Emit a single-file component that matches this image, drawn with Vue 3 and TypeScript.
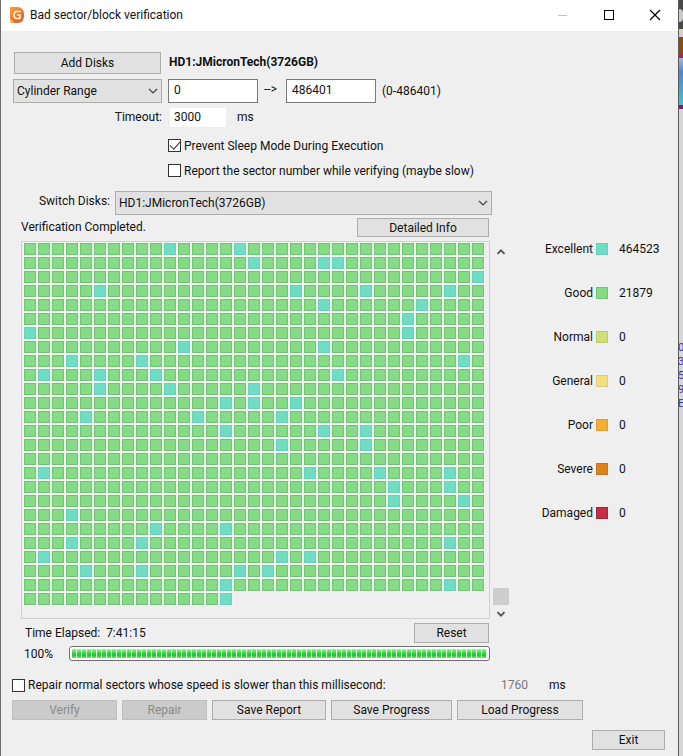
<script setup lang="ts">
import { ref } from 'vue'

type Grade = 'excellent' | 'good' | 'normal' | 'general' | 'poor' | 'severe' | 'damaged'

interface LegendEntry {
  grade: Grade
  label: string
  count: number
}

const mode = ref('Cylinder Range')
const rangeStart = ref('0')
const rangeEnd = ref('486401')
const timeout = ref('3000')
const preventSleep = ref(true)
const reportSector = ref(false)
const repairSlow = ref(false)
const slowLimit = ref('1760')
const disk = ref('HD1:JMicronTech(3726GB)')
const percent = ref(100)

const legend: LegendEntry[] = [
  { grade: 'excellent', label: 'Excellent', count: 464523 },
  { grade: 'good', label: 'Good', count: 21879 },
  { grade: 'normal', label: 'Normal', count: 0 },
  { grade: 'general', label: 'General', count: 0 },
  { grade: 'poor', label: 'Poor', count: 0 },
  { grade: 'severe', label: 'Severe', count: 0 },
  { grade: 'damaged', label: 'Damaged', count: 0 },
]

// Columns holding an "excellent" block, one list for each row of the map.
const columns = 33
const blockCount = 25 * columns + 15
const excellentByRow: number[][] = [
  [10, 15], [16, 21, 22], [32], [5, 19, 24, 30], [21, 28], [27], [0, 27], [11, 21],
  [3, 8, 31], [1, 5, 9, 22], [5, 10, 16], [14, 16, 19], [4, 12, 18], [14, 21, 24],
  [18, 24], [], [1, 20, 25, 30], [26, 30], [26, 31], [3], [9, 14], [3, 8, 30],
  [1, 18, 20], [4, 8, 15, 17], [14, 30], [14],
]

const blocks: Grade[] = Array.from({ length: blockCount }, (_, i) =>
  excellentByRow[Math.floor(i / columns)].includes(i % columns) ? 'excellent' : 'good',
)
</script>

<template>
  <div class="screen">
    <main class="window">
      <header class="titlebar">
        <svg class="logo" viewBox="0 0 16 16" aria-hidden="true">
          <defs>
            <linearGradient id="logo-fill" x1="0" y1="0" x2="1" y2="1">
              <stop offset="0" stop-color="#f9a33c" />
              <stop offset="1" stop-color="#e2501f" />
            </linearGradient>
          </defs>
          <path d="M1 0H8C13 0 15 3 15 8S13 16 8 16H5L1 12Z" fill="url(#logo-fill)" />
          <path d="M1 12L5 16H1Z" fill="#f6b26b" />
          <path d="M12 4.5H8C6 4.5 5 6 5 8S6 11.5 8 11.5H11V8H8" fill="none" stroke="#fff3e6" stroke-width="1.6" />
        </svg>
        <h1 class="title">Bad sector/block verification</h1>
        <button class="caption" aria-label="Minimize" disabled>
          <svg viewBox="0 0 12 12"><path d="M1 6.5H10" stroke="#c4c4c4" /></svg>
        </button>
        <button class="caption" aria-label="Maximize">
          <svg viewBox="0 0 12 12"><rect x="1.5" y="1.5" width="9" height="9" fill="none" stroke="#000" /></svg>
        </button>
        <button class="caption" aria-label="Close">
          <svg viewBox="0 0 12 12"><path d="M1 1L11 11M11 1L1 11" stroke="#000" stroke-width="1.2" /></svg>
        </button>
      </header>

      <div class="body">
        <section class="setup">
          <button class="btn add">Add Disks</button>
          <strong class="disk-name">HD1:JMicronTech(3726GB)</strong>

          <div class="combo">
            <select v-model="mode" aria-label="Range type">
              <option>Cylinder Range</option>
            </select>
            <svg class="chevron" viewBox="0 0 10 6"><path d="M1 1L5 5L9 1" /></svg>
          </div>
          <div class="range">
            <input v-model="rangeStart" class="field" aria-label="Range start" />
            <span class="arrow">--&gt;</span>
            <input v-model="rangeEnd" class="field" aria-label="Range end" />
            <span>(0-486401)</span>
          </div>

          <label class="timeout-label" for="timeout">Timeout:</label>
          <div class="timeout">
            <input id="timeout" v-model="timeout" class="plain" />
            <span>ms</span>
          </div>

          <label class="check option"><input v-model="preventSleep" type="checkbox" />Prevent Sleep Mode During Execution</label>
          <label class="check option"><input v-model="reportSector" type="checkbox" />Report the sector number while verifying (maybe slow)</label>
        </section>

        <div class="results">
          <section class="report">
            <div class="switch">
              <label for="disk">Switch Disks:</label>
              <div class="combo wide">
                <select id="disk" v-model="disk">
                  <option>HD1:JMicronTech(3726GB)</option>
                </select>
                <svg class="chevron" viewBox="0 0 10 6"><path d="M1 1L5 5L9 1" /></svg>
              </div>
            </div>

            <div class="line status">
              <span>Verification Completed.</span>
              <button class="btn detail">Detailed Info</button>
            </div>

            <div class="map">
              <div class="blocks">
                <i v-for="(grade, i) in blocks" :key="i" class="block" :class="grade"></i>
              </div>
            </div>

            <div class="line elapsed">
              <span>Time Elapsed:&nbsp; 7:41:15</span>
              <button class="btn reset">Reset</button>
            </div>

            <div class="progress-row">
              <span id="percent">{{ percent }}%</span>
              <div class="progress" role="progressbar" aria-labelledby="percent" :aria-valuenow="percent">
                <div class="fill" :style="{ width: percent + '%' }"></div>
              </div>
            </div>
          </section>

          <div class="scrollbar">
            <svg class="tick" viewBox="0 0 8 6"><path d="M1 5L4 2L7 5" /></svg>
            <div class="track"><div class="thumb"></div></div>
            <svg class="tick" viewBox="0 0 8 6"><path d="M1 1L4 4L7 1" /></svg>
          </div>

          <dl class="legend">
            <div v-for="entry in legend" :key="entry.grade" class="entry">
              <dt>{{ entry.label }}<i class="block" :class="entry.grade"></i></dt>
              <dd>{{ entry.count }}</dd>
            </div>
          </dl>
        </div>

        <div class="repair">
          <label class="check"><input v-model="repairSlow" type="checkbox" />Repair normal sectors whose speed is slower than this millisecond:</label>
          <input v-model="slowLimit" class="limit" aria-label="Milliseconds" disabled />
          <span>ms</span>
        </div>

        <div class="actions">
          <button class="btn verify" disabled>Verify</button>
          <button class="btn fix" disabled>Repair</button>
          <button class="btn save">Save Report</button>
          <button class="btn progress-save">Save Progress</button>
          <button class="btn load">Load Progress</button>
        </div>

        <footer class="footer">
          <button class="btn exit">Exit</button>
        </footer>
      </div>
    </main>

    <aside class="backdrop" aria-hidden="true">
      <div class="dark"><span></span></div>
      <div class="pale"></div>
      <div class="brown"></div>
      <div class="crimson"></div>
      <div class="sky"></div>
      <div class="purple"></div>
      <div class="sheet">
        <span v-for="digit in ['0', '3', '5', '9', 'E']" :key="digit" class="hex">{{ digit }}</span>
      </div>
    </aside>
  </div>
</template>

<style>
body {
  background: #f0f0f0;
}
</style>

<style scoped>
* {
  box-sizing: border-box;
}

.screen {
  display: flex;
  min-height: 100vh;
  font: 12px/16px Roboto, "Open Sans", sans-serif;
  color: #111;
}

.window {
  flex: 1;
  min-width: 0;
  background: #efefef;
  border-left: 1px solid #6c6c6c;
  border-right: 1px solid #5c5c5c;
}

.titlebar {
  display: flex;
  align-items: center;
  height: 31px;
  padding: 0 0 2px 8px;
  background: #fff;
}

.logo {
  width: 16px;
  height: 16px;
}

.title {
  flex: 1;
  margin: 0 0 0 5px;
  font: inherit;
}

.caption {
  width: 46px;
  height: 28px;
  padding: 0;
  border: 0;
  background: none;
}

.caption svg {
  display: block;
  width: 12px;
  height: 12px;
  margin: 0 auto;
}

button,
input,
select {
  font: inherit;
  color: inherit;
}

.btn {
  height: 20px;
  padding: 0;
  line-height: 16px;
  background: #e1e1e1;
  border: 1px solid #adadad;
}

.btn:disabled {
  color: #8a8a8a;
  background: #cbcbcb;
  border-color: #bfbfbf;
}

.setup {
  display: grid;
  grid-template-columns: 149px 1fr;
  column-gap: 6px;
  padding: 21px 0 0 12px;
}

.add {
  height: 22px;
  margin: 0 1px;
}

.disk-name {
  padding-left: 1px;
  line-height: 20px;
}

.combo {
  display: grid;
  align-items: center;
  height: 24px;
  margin-top: 5px;
}

.combo select,
.chevron {
  grid-area: 1 / 1;
}

.combo select {
  width: 100%;
  height: 24px;
  padding: 0 20px 0 3px;
  appearance: none;
  background: #e1e1e1;
  border: 1px solid #adadad;
  border-radius: 0;
}

.chevron {
  justify-self: end;
  width: 10px;
  height: 6px;
  margin-right: 4px;
  pointer-events: none;
}

.chevron path {
  fill: none;
  stroke: #444;
  stroke-width: 1.2;
}

.range {
  display: flex;
  align-items: center;
  gap: 6px;
  margin-top: 5px;
}

.field {
  width: 90px;
  height: 24px;
  padding: 0 5px 2px;
  background: #fff;
  border: 1px solid #7a7a7a;
}

.arrow {
  width: 16px;
  padding-bottom: 4px;
  white-space: nowrap;
}

.timeout-label {
  text-align: right;
  line-height: 28px;
}

.timeout {
  display: flex;
  align-items: center;
  gap: 11px;
  height: 28px;
  padding-left: 2px;
}

.plain {
  width: 56px;
  height: 19px;
  padding: 0 4px;
  background: #fff;
  border: 0;
}

.check {
  display: flex;
  align-items: center;
  gap: 3px;
}

.option {
  grid-column: 2;
  height: 25px;
}

.timeout,
.timeout-label {
  margin-bottom: 2px;
}

.check input {
  display: grid;
  place-items: center;
  width: 13px;
  height: 13px;
  margin: 0;
  appearance: none;
  background: #fff;
  border: 1px solid #333;
}

.check input:checked::before {
  content: "";
  width: 9px;
  height: 5px;
  margin-top: -3px;
  border: solid #333;
  border-width: 0 0 1px 1px;
  transform: rotate(-48deg);
}

.results {
  display: flex;
  padding: 8px 28px 0 11px;
}

.report {
  flex: 1;
  min-width: 0;
}

.switch {
  display: flex;
  gap: 5px;
}

.switch label {
  width: 98px;
  text-align: right;
  line-height: 20px;
}

.wide {
  flex: 1;
  margin-top: 0;
}

.line {
  display: flex;
  justify-content: space-between;
}

.status {
  padding: 3px 3px 0 9px;
  line-height: 18px;
}

.detail {
  width: 132px;
  height: 19px;
}

.map {
  min-height: 378px;
  margin: 4px 2px 0 9px;
  padding: 1px 2px;
  border: 1px solid #d0d0d0;
}

.blocks {
  display: grid;
  grid-template-columns: repeat(auto-fill, 12px);
  gap: 2px;
}

.block {
  width: 12px;
  height: 12px;
  border: 1px solid;
}

.map .block {
  box-shadow: 0 0 0 1px #f5f5f5;
}

.excellent {
  background: #6fdcc4;
  border-color: #62d4ba;
}

.good {
  background: #86dc86;
  border-color: #6bc66f;
}

.normal {
  background: #cfde78;
  border-color: #bccb62;
}

.general {
  background: #f3dd85;
  border-color: #e4cb6b;
}

.poor {
  background: #f3ae35;
  border-color: #e79f22;
}

.severe {
  background: #db841c;
  border-color: #c87210;
}

.damaged {
  background: #c42f45;
  border-color: #ab2438;
}

.elapsed {
  padding: 4px 3px 0 13px;
  line-height: 20px;
}

.reset {
  width: 75px;
}

.progress-row {
  display: flex;
  padding: 3px 2px 0 12px;
}

.progress-row span {
  width: 45px;
}

.progress {
  flex: 1;
  height: 15px;
  padding: 2px;
  background: #fff;
  border: 1px solid #6f6f6f;
  border-radius: 3px;
}

.fill {
  height: 100%;
  background:
    repeating-linear-gradient(90deg, transparent 0 4px, #d9f6d9 4px 5px),
    linear-gradient(#a5eea9, #2fd03a 50%, #22c42d 70%, #6fe276);
}

.scrollbar {
  display: flex;
  flex-direction: column;
  align-items: center;
  width: 16px;
  height: 370px;
  margin: 57px 0 0 1px;
}

.tick {
  width: 10px;
  height: 7px;
}

.tick path {
  fill: none;
  stroke: #555;
  stroke-width: 1.6;
}

.track {
  display: flex;
  flex: 1;
  flex-direction: column;
  justify-content: flex-end;
  width: 16px;
  padding-bottom: 6px;
}

.thumb {
  height: 17px;
  background: #cdcdcd;
}

.legend {
  width: 141px;
  margin: 50px 0 0;
}

.entry {
  display: grid;
  grid-template-columns: 99px 1fr;
  gap: 11px;
  height: 44px;
}

.entry dt {
  display: flex;
  justify-content: flex-end;
  gap: 3px;
}

.entry dt .block {
  margin-top: 2px;
}

.entry dd {
  margin: 0;
}

.repair {
  display: flex;
  align-items: center;
  margin-top: 14px;
  padding-left: 11px;
}

.repair .check {
  width: 484px;
}

.limit {
  width: 53px;
  height: 18px;
  padding: 0 5px;
  background: none;
  border: 0;
  color: #777;
}

.actions {
  display: flex;
  gap: 5px;
  margin-top: 6px;
  padding-left: 11px;
}

.verify {
  width: 105px;
}

.fix {
  width: 85px;
}

.save {
  width: 114px;
}

.progress-save {
  width: 121px;
}

.load {
  width: 126px;
}

.footer {
  display: flex;
  justify-content: flex-end;
  padding: 10px 13px 6px 0;
}

.exit {
  width: 73px;
}

.backdrop {
  display: flex;
  flex-direction: column;
  width: 4px;
  overflow: hidden;
}

.dark {
  height: 29px;
  padding-top: 9px;
  background: #484848;
}

.dark span {
  display: block;
  width: 4px;
  height: 13px;
  background: #c9c9c9;
  border-radius: 0 6px 6px 0;
}

.pale {
  height: 8px;
  background: #d8d0c4;
}

.brown {
  height: 17px;
  background: #8e4a08;
}

.crimson {
  height: 4px;
  background: #b3204f;
}

.sky {
  height: 47px;
  background: linear-gradient(#a9b4d8, #4a86dc 30%, #38c4d8);
}

.purple {
  height: 4px;
  background: #8c1470;
}

.sheet {
  display: flex;
  flex: 1;
  flex-direction: column;
  align-items: center;
  padding-top: 232px;
  background: #d6d6d6;
}

.hex {
  font-size: 11px;
  line-height: 14px;
  color: #3a2fc0;
}
</style>
